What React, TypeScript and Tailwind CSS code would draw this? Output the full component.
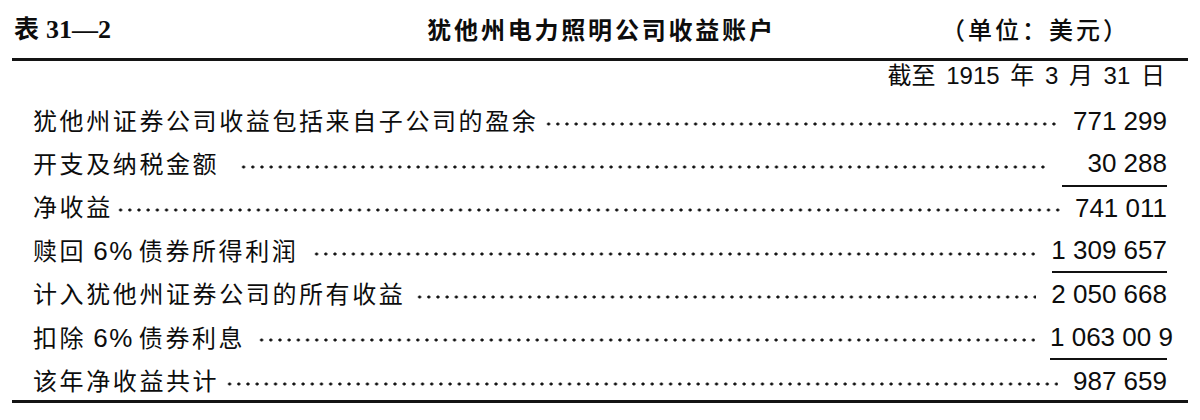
import React from "react";

type Row = {
  label: React.ReactNode;
  value: string;
  gap: string;
  under?: string;
};

const rows: Row[] = [
  { label: "犹他州证券公司收益包括来自子公司的盈余", value: "771 299", gap: "ml-[6px]" },
  { label: "开支及纳税金额", value: "30 288", gap: "ml-[20px]", under: "w-[105px] border-b-2 border-[#111] justify-end" },
  { label: "净收益", value: "741 011", gap: "ml-[3px]" },
  {
    label: (
      <>
        赎回<span className="ml-[7px] mr-[5px] text-[26px] tracking-[1.5px]">6%</span>债券所得利润
      </>
    ),
    value: "1 309 657",
    gap: "ml-[14px]",
    under: "w-[115px] border-b-2 border-[#111] justify-end",
  },
  { label: "计入犹他州证券公司的所有收益", value: "2 050 668", gap: "ml-[10px]" },
  {
    label: (
      <>
        扣除<span className="ml-[7px] mr-[5px] text-[26px] tracking-[1.5px]">6%</span>债券利息
      </>
    ),
    value: "1 063 00 9",
    gap: "ml-[12px]",
    under: "w-[117px] border-b-2 border-[#111] justify-start",
  },
  { label: "该年净收益共计", value: "987 659", gap: "ml-[6px]" },
];

export default function App() {
  return (
    <div className="w-[1200px] h-[420px] bg-white text-[#0d0d0d] overflow-hidden font-['Liberation_Sans','Noto_Sans_CJK_SC',sans-serif]">
      {/* header */}
      <div className="h-[58px] px-[14px] grid grid-cols-[1fr_auto_1fr] items-center">
        <div className="flex items-baseline font-bold">
          <span className="text-[25px] font-['Noto_Sans_CJK_SC',sans-serif]">表</span>
          <span className="ml-[7px] font-['Liberation_Serif',serif] text-[26px]">31—2</span>
        </div>
        <div className="text-[24px] font-bold tracking-[2.8px] font-['Noto_Sans_CJK_SC',sans-serif] pl-[3px]">
          犹他州电力照明公司收益账户
        </div>
        <div className="justify-self-end mr-[56px] text-[24px] tracking-[3px] font-medium font-['Noto_Sans_CJK_SC',sans-serif]">
          （单位：美元）
        </div>
      </div>
      <div className="mx-[12px] h-[3px] bg-[#141414]" />
      {/* date row */}
      <div className="h-[39px] pb-[9px] pr-[35px] flex items-center justify-end text-[24px] [word-spacing:4px]">
        截至 1915 年 3 月 31 日
      </div>
      {/* rows */}
      <div className="pl-[33px] pr-[33px]">
        {rows.map((r, i) => (
          <div
            key={i}
            className={
              i === rows.length - 1
                ? "h-[40px] pt-[4px] flex items-center"
                : "h-[43.3px] flex items-center"
            }
          >
            <span className="text-[24px] tracking-[2.6px] whitespace-nowrap">{r.label}</span>
            <div
              className={`${r.gap} mr-[15px] flex-1 h-[4px] mt-[4px] bg-[radial-gradient(circle,#111_1.3px,transparent_1.8px)] bg-[length:9.2px_4px] bg-repeat-x bg-left`}
            />
            <div className={`h-full flex items-center whitespace-nowrap text-[26px] ${r.under ?? ""}`}>
              {r.value}
            </div>
          </div>
        ))}
      </div>
      <div className="mx-[12px] h-[3px] bg-[#141414]" />
    </div>
  );
}
